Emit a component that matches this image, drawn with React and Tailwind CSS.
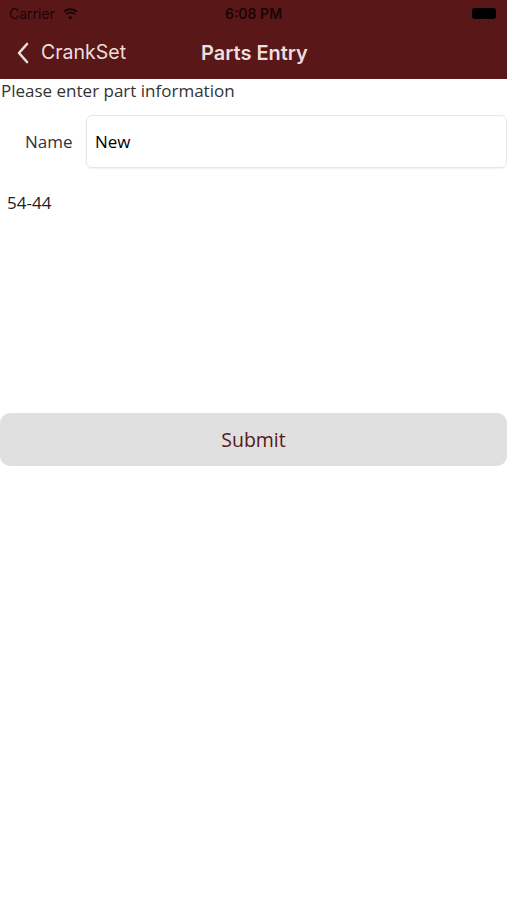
const Wifi = () => (
  <svg width="17" height="12" viewBox="0 0 17 12" className="fill-[#1a0505]">
    <path d="M8.5 2.2c2.3 0 4.4.9 6 2.4l1.3-1.3C13.9 1.4 11.3.3 8.5.3S3.1 1.4 1.2 3.3l1.3 1.3c1.6-1.5 3.7-2.4 6-2.4z" />
    <path d="M8.5 5.6c1.4 0 2.6.5 3.6 1.4l1.3-1.3C12.1 4.4 10.4 3.7 8.5 3.7S4.9 4.4 3.6 5.7l1.3 1.3c1-.9 2.2-1.4 3.6-1.4z" />
    <path d="M8.5 11.5l2.3-2.3c-.6-.6-1.4-.9-2.3-.9s-1.7.3-2.3.9z" />
  </svg>
)

const App = () => {
  return (
    <div className="min-h-[900px] bg-white font-['Open_Sans',sans-serif]">
      <div className="bg-[#5a1718]">
        <div className="h-[27px] flex items-center justify-between px-[9px] font-['Inter',sans-serif] text-[#1a0505]">
          <div className="flex items-center gap-[7px] w-[120px]">
            <span className="text-[14px]">Carrier</span>
            <Wifi />
          </div>
          <span className="text-[14px] font-semibold">6:08 PM</span>
          <div className="w-[120px] flex justify-end pr-[2px]">
            <div className="w-[24px] h-[11px] rounded-[3px] bg-black" />
          </div>
        </div>
        <div className="h-[52px] relative flex items-center font-['Inter',sans-serif] text-[#ecdede]">
          <div className="flex items-center gap-[11px] pl-[16px]">
            <svg width="14" height="22" viewBox="0 0 14 22" fill="none" stroke="currentColor" strokeWidth="2.6" strokeLinecap="round" strokeLinejoin="round">
              <path d="M11 2L3 11l8 9" />
            </svg>
            <span className="text-[19.5px]">CrankSet</span>
          </div>
          <span className="absolute left-[201px] text-[20px] font-semibold">Parts Entry</span>
        </div>
      </div>

      <p className="pl-[1px] text-[17px] text-[#333] leading-[24px]">Please enter part information</p>

      <div className="flex items-center mt-[12px] h-[53px]">
        <span className="w-[86px] pl-[25px] text-[17px] text-[#333]">Name</span>
        <div className="flex-1 h-full flex items-center pl-[8px] border border-[#e6e6e6] rounded-[6px] shadow-[0_1px_2px_rgba(0,0,0,0.06)] text-[17px] text-black">
          New
        </div>
      </div>

      <p className="pl-[7px] mt-[23px] text-[17px] text-[#222] leading-[24px]">54-44</p>

      <button className="mt-[198px] w-full h-[53px] rounded-[10px] bg-[#e0e0e0] text-[19.5px] text-[#5a1718]">
        Submit
      </button>
    </div>
  )
}

export default App
